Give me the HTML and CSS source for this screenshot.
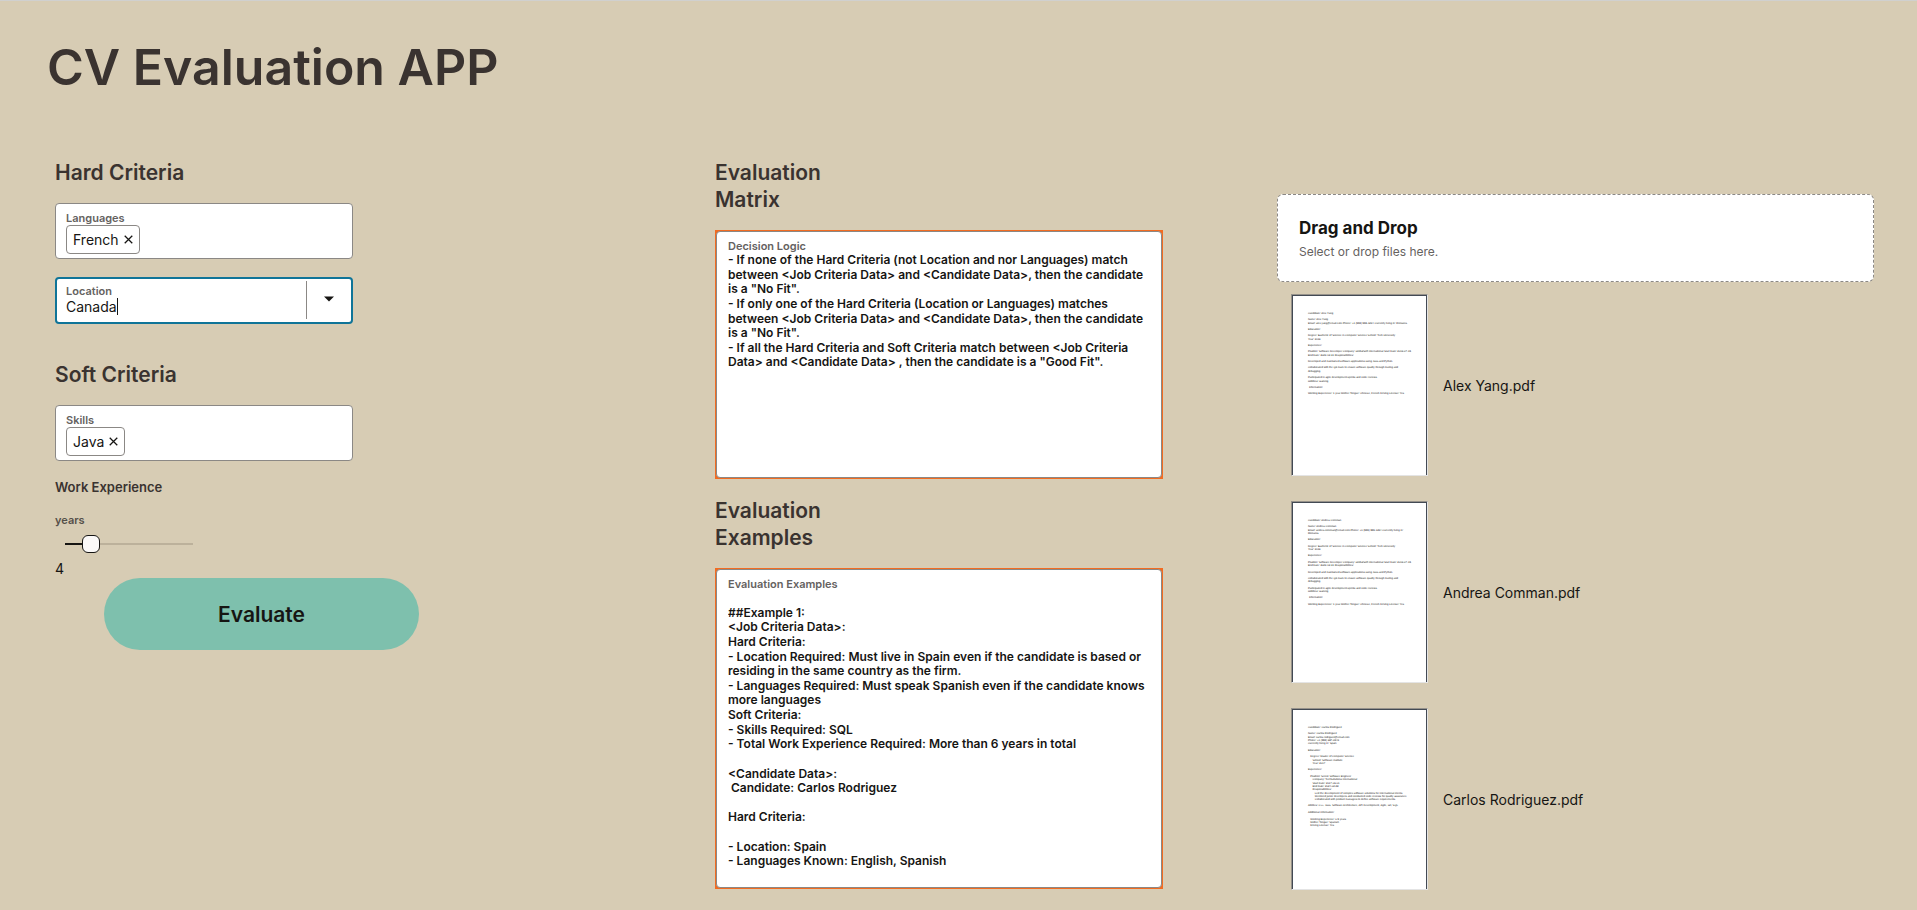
FILE: index.html
```html
<!DOCTYPE html>
<html lang="en">
<head>
<meta charset="utf-8">
<title>CV Evaluation APP</title>
<link rel="stylesheet" href="styles.css">
</head>
<body>
<header class="page-header"><h1>CV Evaluation APP</h1></header>
<main class="columns">
  <form class="criteria">
    <h2>Hard Criteria</h2>
    <div class="field">
      <label class="field-label" for="languages">Languages</label>
      <div class="chips">
        <span class="chip">French
          <button type="button" class="chip-remove" aria-label="Remove French"><svg viewBox="0 0 10 10"><path d="M.8 .8l8.4 8.4M9.2 .8l-8.4 8.4"/></svg></button>
        </span>
        <input id="languages" class="chip-input" type="text">
      </div>
    </div>
    <div class="field field-active">
      <div class="combo-main">
        <label class="field-label" for="location">Location</label>
        <div class="combo-value"><input id="location" class="combo-input" type="text" value="Canada"><span class="caret"></span></div>
      </div>
      <button type="button" class="combo-toggle" aria-label="Show locations"><svg viewBox="0 0 10 6"><path d="M0 .5h10L5 5.5z"/></svg></button>
    </div>
    <h2 class="section-next">Soft Criteria</h2>
    <div class="field">
      <label class="field-label" for="skills">Skills</label>
      <div class="chips">
        <span class="chip">Java
          <button type="button" class="chip-remove" aria-label="Remove Java"><svg viewBox="0 0 10 10"><path d="M.8 .8l8.4 8.4M9.2 .8l-8.4 8.4"/></svg></button>
        </span>
        <input id="skills" class="chip-input" type="text">
      </div>
    </div>
    <h3>Work Experience</h3>
    <label class="years-label" for="years">years</label>
    <input id="years" class="slider" type="range" min="1" max="20" value="4">
    <output class="years-value" for="years">4</output>
    <button type="button" class="evaluate">Evaluate</button>
  </form>

  <section class="evaluation">
    <h2>Evaluation<br>Matrix</h2>
    <div class="text-frame"><div class="text-box">
      <label class="field-label" for="logic">Decision Logic</label>
      <textarea id="logic" class="logic">- If none of the Hard Criteria (not Location and nor Languages) match between &lt;Job Criteria Data&gt; and &lt;Candidate Data&gt;, then the candidate is a "No Fit".
- If only one of the Hard Criteria (Location or Languages) matches between &lt;Job Criteria Data&gt; and &lt;Candidate Data&gt;, then the candidate is a "No Fit".
- If all the Hard Criteria and Soft Criteria match between &lt;Job Criteria Data&gt; and &lt;Candidate Data&gt; , then the candidate is a "Good Fit".</textarea>
    </div></div>
    <h2 class="examples-title">Evaluation<br>Examples</h2>
    <div class="text-frame"><div class="text-box">
      <label class="field-label" for="examples">Evaluation Examples</label>
      <textarea id="examples" class="examples">

##Example 1:
&lt;Job Criteria Data&gt;:
Hard Criteria:
- Location Required: Must live in Spain even if the candidate is based or residing in the same country as the firm.
- Languages Required: Must speak Spanish even if the candidate knows more languages
Soft Criteria:
- Skills Required: SQL
- Total Work Experience Required: More than 6 years in total

&lt;Candidate Data&gt;:
 Candidate: Carlos Rodriguez

Hard Criteria:

- Location: Spain
- Languages Known: English, Spanish</textarea>
    </div></div>
  </section>

  <section class="files">
    <label class="dropzone">
      <strong class="drop-title">Drag and Drop</strong>
      <span class="drop-hint">Select or drop files here.</span>
      <input class="file-input" type="file" multiple>
    </label>
    <ul class="file-list">
      <li class="file">
        <div class="thumb"><svg class="sheet" viewBox="39 33 402 540">
          <text x="84" y="87">Candidate: Alex Yang</text>
          <text x="84" y="106">Name: Alex Yang</text>
          <text x="84" y="116">Email: alex.yang@email.com Phone: +1 (555) 555-1234 Currently living in: Romania</text>
          <text x="84" y="135">Education:</text>
          <text x="84" y="154">Degree: Bachelor of Science in Computer Science School: Tech University</text>
          <text x="84" y="165">Year: 2019</text>
          <text x="84" y="184">Experience:</text>
          <text x="84" y="203">Position: Software Developer Company: GlobalSoft International Start Date: 2019-07-15</text>
          <text x="84" y="213">End Date: 2023-12-31 Responsibilities:</text>
          <text x="84" y="232">Developed and maintained software applications using Java and Python.</text>
          <text x="84" y="251">Collaborated with the QA team to ensure software quality through testing and</text>
          <text x="84" y="262">debugging.</text>
          <text x="84" y="281">Participated in agile development sprints and code reviews.</text>
          <text x="84" y="291">Hobbies: Gaming</text>
          <text x="87" y="311">Information:</text>
          <text x="84" y="330">Working Experience: 1 year Mother Tongue: Chinese, French Driving License: Yes</text>
        </svg></div>
        <span class="file-name">Alex Yang.pdf</span>
      </li>
      <li class="file">
        <div class="thumb"><svg class="sheet" viewBox="39 39 402 540">
          <text x="84" y="93">Candidate: Andrea Comman</text>
          <text x="84" y="112">Name: Andrea Comman</text>
          <text x="84" y="122">Email: andrea.comman@email.com Phone: +1 (555) 555-1234 Currently living in:</text>
          <text x="84" y="132">Romania</text>
          <text x="84" y="151">Education:</text>
          <text x="84" y="171">Degree: Bachelor of Science in Computer Science School: Tech University</text>
          <text x="84" y="181">Year: 2019</text>
          <text x="84" y="200">Experience:</text>
          <text x="84" y="219">Position: Software Developer Company: GlobalSoft International Start Date: 2019-07-15</text>
          <text x="84" y="229">End Date: 2023-12-31 Responsibilities:</text>
          <text x="84" y="249">Developed and maintained software applications using Java and Python.</text>
          <text x="84" y="268">Collaborated with the QA team to ensure software quality through testing and</text>
          <text x="84" y="278">debugging.</text>
          <text x="84" y="298">Participated in agile development sprints and code reviews.</text>
          <text x="84" y="307">Hobbies: Gaming</text>
          <text x="87" y="327">Information:</text>
          <text x="84" y="346">Working Experience: 1 year Mother Tongue: Chinese, French Driving License: Yes</text>
        </svg></div>
        <span class="file-name">Andrea Comman.pdf</span>
      </li>
      <li class="file">
        <div class="thumb"><svg class="sheet" viewBox="39 33 402 540">
          <text x="84" y="87">Candidate: Carlos Rodriguez</text>
          <text x="84" y="106">Name: Carlos Rodriguez</text>
          <text x="84" y="116">Email: carlos.rodriguez@email.com</text>
          <text x="84" y="126">Phone: +1 (555) 987-6543</text>
          <text x="84" y="136">Currently living in: Spain</text>
          <text x="84" y="156">Education:</text>
          <text x="91" y="176">Degree: Master of Computer Science</text>
          <text x="98" y="186">School: Software Institute</text>
          <text x="98" y="196">Year: 2017</text>
          <text x="84" y="215">Experience:</text>
          <text x="91" y="235">Position: Senior Software Engineer</text>
          <text x="98" y="245">Company: TechSolutions International</text>
          <text x="98" y="255">Start Date: 2017-09-01</text>
          <text x="98" y="265">End Date: 2024-02-28</text>
          <text x="98" y="275">Responsibilities:</text>
          <text x="105" y="285">Led the development of complex software solutions for international clients.</text>
          <text x="105" y="295">Mentored junior developers and conducted code reviews for quality assurance.</text>
          <text x="105" y="305">Collaborated with product managers to define software requirements.</text>
          <text x="84" y="324">Abilities: C++, Java, Software Architecture, API Development, Agile, Git, SQL</text>
          <text x="84" y="344">Additional Information:</text>
          <text x="91" y="364">Working Experience: 6.5 years</text>
          <text x="91" y="374">Mother Tongue: Spanish</text>
          <text x="91" y="384">Driving License: Yes</text>
        </svg></div>
        <span class="file-name">Carlos Rodriguez.pdf</span>
      </li>
    </ul>
  </section>
</main>
</body>
</html>
```

FILE: styles.css
```css
* { box-sizing: border-box; }

body {
  margin: 0;
  min-height: 100vh;
  border-top: 1px solid #d0d0cf;
  background: #d7ccb4;
  color: #161513;
  font-family: Inter, "Liberation Sans", sans-serif;
  font-size: 14px;
  line-height: 17px;
}

button, input, textarea { font: inherit; color: inherit; }
button { cursor: pointer; }

.page-header { padding: 35px 47px 61px; }

h1, h2, h3 { margin: 0; color: #3a3330; font-weight: 600; }
h1 { font-size: 50px; line-height: 62px; }
h2 { margin-bottom: 17px; font-size: 21px; line-height: 27px; }
h3 { margin: 18px 0; font-size: 13px; line-height: 17px; }

.columns {
  display: grid;
  grid-template-columns: 660fr 562fr 597fr;
  padding: 0 43px 12px 55px;
}

.criteria { display: flex; flex-direction: column; align-items: flex-start; }

.field {
  width: 298px;
  min-height: 56px;
  padding: 8px 10px 4px;
  border: 1px solid #8b8885;
  border-radius: 4px;
  background: #fff;
}

.field-label {
  display: block;
  color: #65625f;
  font-size: 11px;
  font-weight: 600;
  line-height: 13px;
}

.chips { display: flex; align-items: center; }

.chip {
  display: flex;
  align-items: center;
  gap: 5px;
  height: 29px;
  padding: 0 6px;
  border: 1px solid #8b8885;
  border-radius: 4px;
}

.chip-remove { display: flex; padding: 0; border: 0; background: none; }
.chip-remove svg { width: 9px; height: 9px; fill: none; stroke: #161513; stroke-width: 1.4; }
.chip-input { flex: 1; min-width: 0; border: 0; outline: 0; background: none; }

.field-active {
  display: flex;
  min-height: 47px;
  margin-top: 18px;
  padding: 2px 0 3px 9px;
  border: 2px solid #0f7498;
}

.combo-main { flex: 1; padding-top: 4px; border-right: 1px solid #8b8885; }
.combo-value { display: flex; align-items: center; }
.combo-input { field-sizing: content; padding: 0; border: 0; outline: 0; background: none; }
.caret { width: 1px; height: 17px; background: #161513; }

.combo-toggle {
  display: flex;
  align-items: center;
  justify-content: center;
  width: 44px;
  padding: 0 0 3px;
  border: 0;
  background: none;
}
.combo-toggle svg { width: 10px; height: 6px; fill: #161513; }

.section-next { margin-top: 37px; }

.years-label { color: #55504a; font-size: 11px; font-weight: 600; line-height: 13px; }

.slider {
  appearance: none;
  width: 128px;
  height: 18px;
  margin: 8px 10px 7px;
  background: linear-gradient(90deg, #161513 20%, #bcb19b 20%) center / 100% 2px no-repeat;
}

.slider::-webkit-slider-thumb {
  appearance: none;
  width: 18px;
  height: 18px;
  border: 1px solid #161513;
  border-radius: 6px;
  background: #fbf9f8;
}

.evaluate {
  width: 315px;
  height: 72px;
  margin: 1px 0 0 49px;
  border: 0;
  border-radius: 36px;
  background: #7ec0ad;
  font-size: 21px;
  font-weight: 600;
}

.text-frame {
  width: 448px;
  max-width: 100%;
  border: 1px solid #f26b21;
  background: #f26b21;
}

.text-box {
  padding: 8px 11px 9px;
  border: 1px solid #8b8885;
  border-radius: 4px;
  background: #fff;
}

.text-box textarea {
  display: block;
  width: 100%;
  padding: 0;
  border: 0;
  outline: 0;
  resize: none;
  overflow: hidden;
  background: none;
  font-size: 12px;
  font-weight: 600;
  line-height: 1.22;
}

.logic { height: 215px; }
.examples { height: 287px; }
.examples-title { margin-top: 18px; }

.dropzone {
  display: flex;
  flex-direction: column;
  justify-content: center;
  gap: 5px;
  height: 88px;
  margin-top: 35px;
  padding: 0 21px;
  border: 1px dashed #8b8885;
  border-radius: 6px;
  background: #fff;
}

.drop-title { font-size: 17px; font-weight: 700; line-height: 22px; }
.drop-hint { color: #65625f; font-size: 12px; line-height: 15px; }
.file-input { display: none; }

.file-list {
  display: flex;
  flex-direction: column;
  gap: 25px;
  margin: 12px 0 0 14px;
  padding: 0;
  list-style: none;
}

.file { display: flex; align-items: center; gap: 15px; }

.thumb {
  width: 137px;
  height: 182px;
  border: 1px solid;
  border-color: #96928b #e4e4e4 #e4e4e4 #96928b;
  background: #fff;
}

.sheet {
  display: block;
  width: 100%;
  height: 100%;
  border: 1px solid #434a54;
  border-bottom: 0;
  fill: #161513;
  font-family: "Liberation Sans", sans-serif;
  font-size: 8px;
  text-rendering: geometricPrecision;
}
```
